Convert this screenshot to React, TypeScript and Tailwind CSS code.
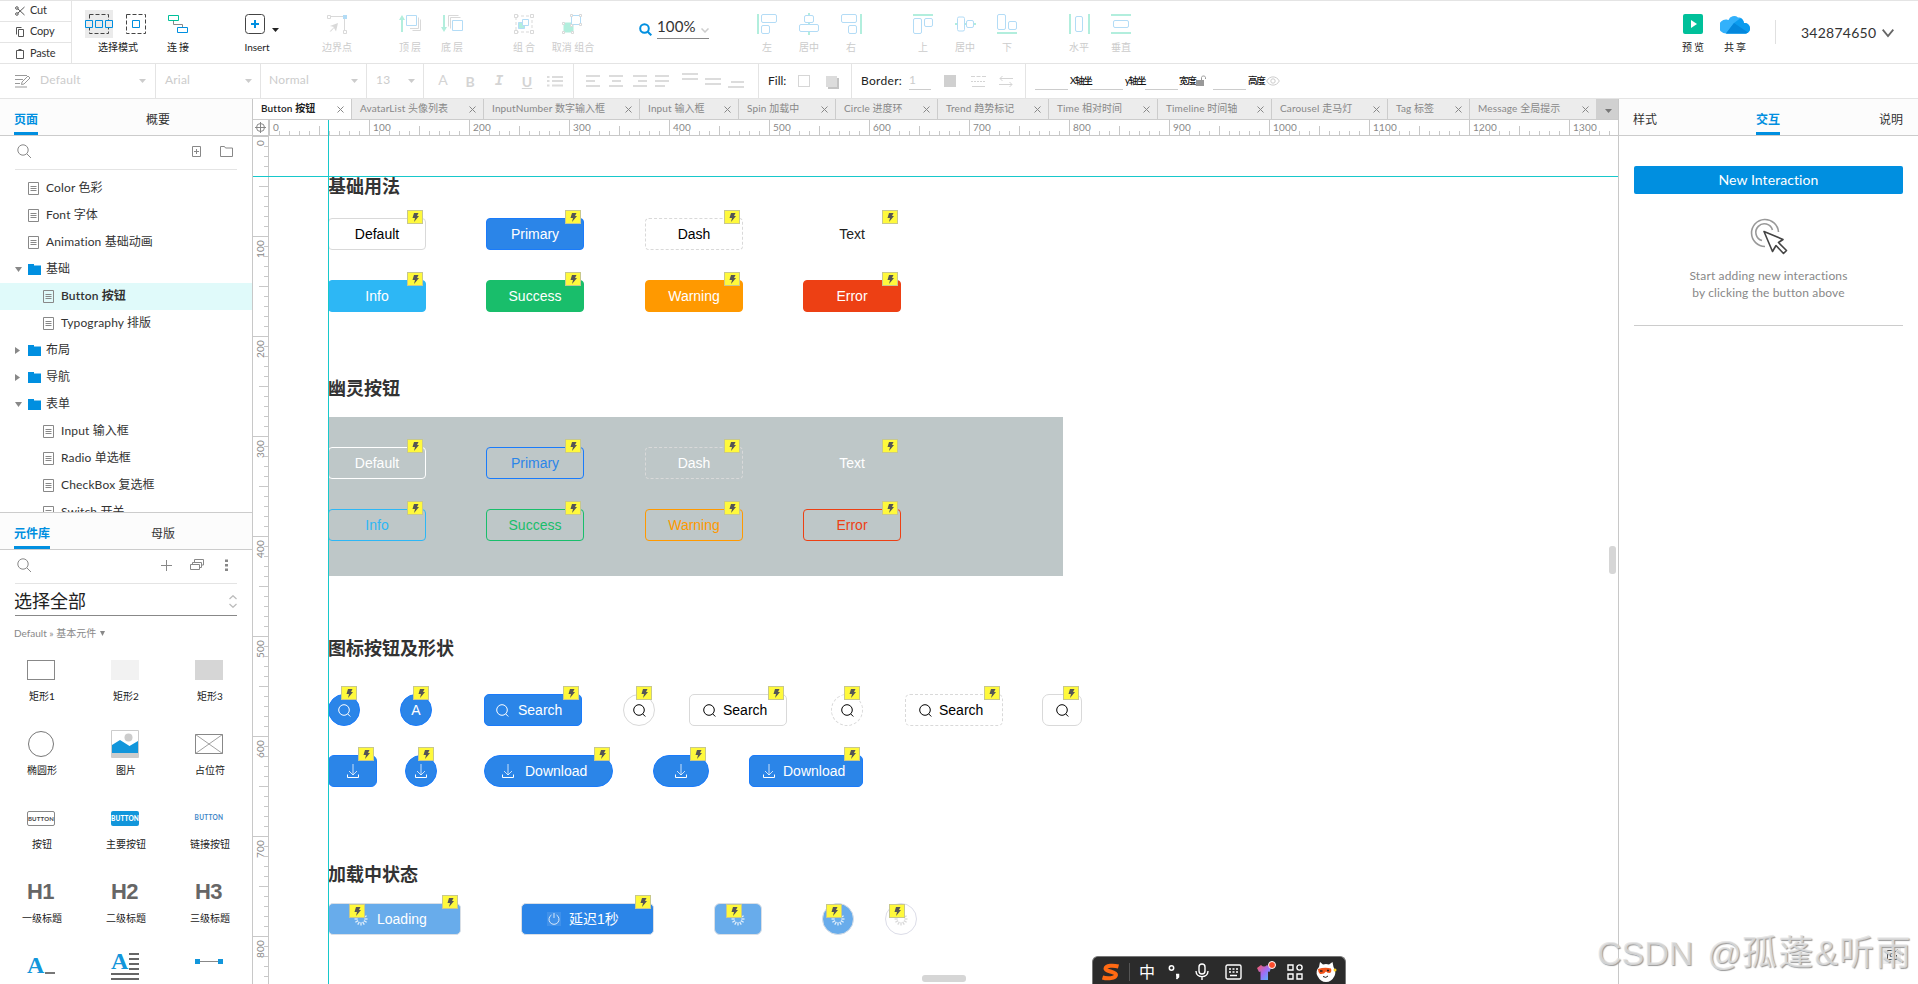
import React from "react";

/* ---------- helpers ---------- */

function Mix({ text, className = "" }: { text: string; className?: string }) {
  const m = text.match(/^([\x20-\x7e]*)([^]*)$/);
  return (
    <span className={"whitespace-pre " + className}>
      <span className="tracking-[0.15px]">{m ? m[1] : ""}</span>
      {m ? m[2] : text}
    </span>
  );
}

type SvgProps = { w: number; h: number; className?: string; children: React.ReactNode; sw?: number };
function Svg({ w, h, className = "", children, sw = 1 }: SvgProps) {
  return (
    <svg width={w} height={h} viewBox={`0 0 ${w} ${h}`} fill="none" stroke="currentColor" strokeWidth={sw} className={"block shrink-0 " + className}>
      {children}
    </svg>
  );
}

const Caret = ({ className = "" }: { className?: string }) => (
  <Svg w={7} h={4} className={className}>
    <path d="M0 0h7L3.5 4z" fill="currentColor" stroke="none" />
  </Svg>
);

const B = "#b3dcf6";
const G = "#b2eedd";
const N = "#d9d9d9";

/* ---------- top toolbar ---------- */

function Clip({ label, last, children }: { label: string; last?: boolean; children: React.ReactNode }) {
  return (
    <div className={"flex h-[21px] items-center pl-[15px] text-[11px] tracking-[-0.2px] text-[#333] " + (last ? "" : "border-b border-[#e4e4e4]")}>
      <span className="flex w-[15px]">{children}</span>
      <span className="-mt-[1px]">{label}</span>
    </div>
  );
}

type ToolProps = { label: string; className?: string; dark?: boolean; spaced?: boolean; children: React.ReactNode };
function Tool({ label, className = "", dark, spaced, children }: ToolProps) {
  return (
    <div className={"flex shrink-0 flex-col items-center pt-[9px] " + (className.includes("w-[") ? "" : "w-[40px] ") + className}>
      <div className="flex h-[28px] items-center justify-center">{children}</div>
      <div className={"mt-[2px] whitespace-nowrap text-[10px] leading-[14px] " + (dark ? "text-[#222] " : "text-[#ccc] ") + (spaced ? "tracking-[2px] -mr-[2px]" : "")}>{label}</div>
    </div>
  );
}

function TopBar() {
  return (
    <div className="flex h-[64px] shrink-0 border-y border-[#e4e4e4] bg-white">
      <div className="w-[72px] shrink-0 border-r border-[#e4e4e4]">
        <Clip label="Cut">
          <Svg w={10} h={10} className="text-[#555]">
            <path d="M2.8 2.8 9.5 9M2.8 7.2 9.5 1" />
            <circle cx="1.9" cy="2" r="1.3" />
            <circle cx="1.9" cy="8" r="1.3" />
          </Svg>
        </Clip>
        <Clip label="Copy">
          <Svg w={10} h={10} className="text-[#555]">
            <path d="M1.5 7.5v-7h5M3.5 2.5h5v7h-5z" />
          </Svg>
        </Clip>
        <Clip label="Paste" last>
          <Svg w={10} h={10} className="text-[#555]">
            <path d="M1.5 1.5h7v8h-7z" />
            <path d="M3.5 1h3" strokeWidth="2" />
          </Svg>
        </Clip>
      </div>

      <Tool label="选择模式" dark className="ml-[13px] w-[66px]">
        <div className="flex w-[66px] items-center gap-[13px]">
          <div className="flex size-[28px] items-center justify-center bg-[#ebebeb]">
            <Svg w={28} h={20} className="text-[#008fe0]">
              <path d="M4.500 .5h19v19h-19z" stroke="#444" strokeDasharray="4 2" />
              <path d="M.5 6.500h7v7h-7zM10.500 6.500h7v7h-7zM20.500 6.500h7v7h-7z" fill="#ebebeb" />
            </Svg>
          </div>
          <Svg w={20} h={20} className="text-[#008fe0]">
            <path d="M.5 .5h19v19h-19z" stroke="#444" strokeDasharray="4 2" />
            <path d="M6.500 6.500h7v7h-7z" />
          </Svg>
        </div>
      </Tool>
      <Tool label="连接" dark spaced className="ml-[7px]">
        <Svg w={20} h={18} className="mb-[1px]">
          <path d="M5.500 5v4.500h9v3" stroke="#888" />
          <path d="M.5 .5h10v5h-10z" stroke="#00c09a" fill="#fff" />
          <path d="M9.500 12.500h10v5h-10z" stroke="#008fe0" fill="#fff" />
        </Svg>
      </Tool>
      <Tool label="Insert" dark className="ml-[46px] w-[26px]">
        <Svg w={20} h={20} className="mr-[4px]">
          <rect x=".5" y=".5" width="19" height="19" rx="3" stroke="#444" />
          <path d="M6 10h8M10 6v8" stroke="#008fe0" strokeWidth="2" />
        </Svg>
      </Tool>
      <div className="ml-[2px] flex w-[9px] pt-[27px]">
        <Caret className="text-[#222]" />
      </div>
      <Tool label="边界点" className="ml-[36px]">
        <Svg w={20} h={20}>
          <path d="M3 2.500h13M17.500 4v12" stroke={N} />
          <path d="M.5 1.500h3v3h-3zM16.500 16.500h3v3h-3z" stroke={N} />
          <path d="M16 1h4v4h-4z" fill={B} stroke="none" />
          <path d="M2.500 17.500 7 13l-4-1 8-3-2 8.500-2-3.500-3 3.500z" fill={N} stroke="none" />
        </Svg>
      </Tool>
      <Tool label="顶层" spaced className="ml-[33px]">
        <Svg w={22} h={18} className="mb-[1px]">
          <path d="M3 17V3" stroke={G} strokeWidth="2" />
          <path d="M0 5l3-5 3 5z" fill={G} stroke="none" />
          <path d="M13.500 15.500h8v-11M11 13.500h8.500v-11" stroke={N} />
          <path d="M7.500 .5h10v10h-10z" stroke={B} fill="#fff" />
        </Svg>
      </Tool>
      <Tool label="底层" spaced className="ml-[2px]">
        <Svg w={22} h={18} className="mb-[1px]">
          <path d="M3 0v14" stroke={G} strokeWidth="2" />
          <path d="M0 12l3 5 3-5z" fill={G} stroke="none" />
          <path d="M7.500 11.500V.5h10M9.500 13.500v-11h10" stroke={N} />
          <path d="M11.500 5.500h10v10h-10z" stroke={B} fill="#fff" />
        </Svg>
      </Tool>
      <Tool label="组合" spaced className="ml-[32px]">
        <Svg w={20} h={20}>
          <path d="M2 2h16v16H2z" stroke={N} strokeDasharray="3 2" />
          <path d="M.5 .5h3v3h-3zM16.500 .5h3v3h-3zM.5 16.500h3v3h-3zM16.500 16.500h3v3h-3z" stroke={N} fill="#fff" />
          <path d="M4.500 8.500h6v6h-6z" fill={G} stroke={B} />
          <path d="M8.500 5.500h6v6h-6z" fill="#fff" stroke={B} />
        </Svg>
      </Tool>
      <Tool label="取消 组合" className="ml-[4px] w-[50px]">
        <Svg w={20} h={20} className="mr-[2px]">
          <path d="M2 9h9v9H2z" fill={G} stroke={G} />
          <path d="M9.500 1.500h9v9h-9z" stroke={B} fill="#fff" />
          <path d="M8.500 .5h2v2h-2zM17.500 .5h2v2h-2zM17.500 9.500h2v2h-2zM.5 8.500h2v2h-2zM.5 17.500h2v2h-2zM9.500 17.500h2v2h-2zM8.500 10.500h2v2h-2z" stroke={N} fill="#fff" />
        </Svg>
      </Tool>

      <div className="ml-[41px] flex w-[70px] shrink-0 pt-[11px]">
        <Svg w={13} h={13} sw={2} className="mt-[11px] text-[#008fe0]">
          <circle cx="5.500" cy="5.500" r="4.300" />
          <path d="M8.700 8.700 12.300 12.300" />
        </Svg>
        <div className="ml-[5px] flex h-[27px] w-[52px] items-center justify-between border-b border-[#888]">
          <span className="mt-[2px] text-[15px] leading-[18px] tracking-[0.15px] text-[#333]">100%</span>
          <Svg w={8} h={5} sw={1.5} className="mt-[11px] text-[#ccc]">
            <path d="M.5 .5 4 4 7.500 .5" />
          </Svg>
        </div>
      </div>

      <Tool label="左" className="ml-[38px]">
        <Svg w={20} h={20}>
          <path d="M1 0v20" stroke={G} strokeWidth="2" />
          <rect x="4.500" y=".5" width="15" height="8" rx="1.500" stroke={B} />
          <rect x="4.500" y="11.500" width="8" height="8" rx="1.500" stroke={B} />
        </Svg>
      </Tool>
      <Tool label="居中" className="ml-[2px]">
        <Svg w={20} h={22}>
          <path d="M10 0v22" stroke={G} strokeWidth="2" />
          <rect x="5.500" y="2.500" width="9" height="7" rx="1.500" stroke={B} fill="#fff" />
          <rect x=".5" y="11.500" width="19" height="7" rx="1.500" stroke={B} fill="#fff" />
        </Svg>
      </Tool>
      <Tool label="右" className="ml-[2px]">
        <Svg w={21} h={20}>
          <path d="M20 0v20" stroke={G} strokeWidth="2" />
          <rect x=".5" y=".5" width="15" height="8" rx="1.500" stroke={B} />
          <rect x="7.500" y="11.500" width="8" height="8" rx="1.500" stroke={B} />
        </Svg>
      </Tool>
      <Tool label="上" className="ml-[32px]">
        <Svg w={20} h={20}>
          <path d="M0 1h20" stroke={G} strokeWidth="2" />
          <rect x=".5" y="4.500" width="8" height="15" rx="1.500" stroke={B} />
          <rect x="11.500" y="4.500" width="8" height="8" rx="1.500" stroke={B} />
        </Svg>
      </Tool>
      <Tool label="居中" className="ml-[2px]">
        <Svg w={21} h={18}>
          <path d="M0 9h21" stroke={G} strokeWidth="2" />
          <rect x="2.500" y="2" width="7" height="14" rx="1.500" stroke={B} fill="#fff" />
          <rect x="11.500" y="5.500" width="7" height="7" rx="1.500" stroke={B} fill="#fff" />
        </Svg>
      </Tool>
      <Tool label="下" className="ml-[2px]">
        <Svg w={20} h={20}>
          <path d="M0 19h20" stroke={G} strokeWidth="2" />
          <rect x=".5" y=".5" width="8" height="15" rx="1.500" stroke={B} />
          <rect x="11.500" y="7.500" width="8" height="8" rx="1.500" stroke={B} />
        </Svg>
      </Tool>
      <Tool label="水平" className="ml-[32px]">
        <Svg w={21} h={20}>
          <path d="M1 0v20M20 0v20" stroke={G} strokeWidth="2" />
          <rect x="6.500" y="2.500" width="7" height="15" rx="1.500" stroke={B} />
        </Svg>
      </Tool>
      <Tool label="垂直" className="ml-[2px]">
        <Svg w={20} h={20}>
          <path d="M0 1h20M0 19h20" stroke={G} strokeWidth="2" />
          <rect x="2.500" y="6.500" width="15" height="7" rx="1.500" stroke={B} />
        </Svg>
      </Tool>

      <div className="ml-auto flex w-[245px] shrink-0">
        <Tool label="预览" dark spaced>
          <Svg w={20} h={20}>
            <rect width="20" height="20" rx="2" fill="#00c09a" stroke="none" />
            <path d="M8 6l6 4-6 4z" fill="#fff" stroke="none" />
          </Svg>
        </Tool>
        <Tool label="共享" dark spaced className="ml-[2px]">
          <Svg w={30} h={20} className="mb-[1px]">
            <path d="M6 19.500a6 6 0 0 1 0-14c1 0 2 .3 2.500 .6A6 6 0 0 1 18 3.500c2-.3 5 .5 6 5.500 3.500 0 6 2 6 5.500s-2.500 5-5 5z" fill="#33b1fb" stroke="none" />
            <path d="M6 19.500 14 9l6-4.500c2 0 3.500 1.500 4 4.500 3.500 0 6 2 6 5.500s-2.500 5-5 5z" fill="#0a9bee" stroke="none" />
            <path d="M6 19.500 14 9l14 9.500c-1 .7-2 1-3 1z" fill="#0487dc" stroke="none" />
          </Svg>
        </Tool>
        <div className="ml-[20px] mt-[19px] h-[24px] w-px bg-[#e0e0e0]" />
        <div className="ml-[25px] mt-[21px] flex h-[20px] items-center text-[14px] tracking-[0.25px] text-[#333]">342874650</div>
        <Svg w={12} h={9} sw={1.800} className="ml-[6px] mt-[28px] text-[#666]">
          <path d="M.7 .7 6 7 11.300 .7" />
        </Svg>
      </div>
    </div>
  );
}

/* ---------- format bar ---------- */

function Drop({ label, className }: { label: string; className: string }) {
  return (
    <div className={"flex h-full shrink-0 items-center justify-between border-r border-[#e4e4e4] text-[12px] tracking-[0.2px] text-[#ccc] " + className}>
      <span className="pb-[2px]">{label}</span>
      <Caret className="text-[#ccc]" />
    </div>
  );
}

const Bars = ({ d, w = 16, className = "" }: { d: string; w?: number; className?: string }) => (
  <Svg w={w} h={14} sw={2} className={"text-[#dcdcdc] " + className}>
    <path d={d} />
  </Svg>
);

function FormatBar() {
  return (
    <div className="flex h-[35px] shrink-0 items-center border-b border-[#e4e4e4] bg-white">
      <Svg w={16} h={14} className="ml-[15px] text-[#999]">
        <path d="M0 1.500h12M0 5.500h8M0 9.500h5M0 13h12" />
        <path d="M6.500 10.500 7 8l6-6 2 2-6 6z" />
      </Svg>
      <Drop label="Default" className="ml-[9px] w-[116px] pr-[9px]" />
      <Drop label="Arial" className="w-[105px] pl-[9px] pr-[8px]" />
      <Drop label="Normal" className="w-[106px] pl-[8px] pr-[8px]" />
      <Drop label="13" className="w-[57px] pl-[9px] pr-[8px]" />
      <div className="flex h-full w-[150px] shrink-0 items-center border-r border-[#e4e4e4] text-[14px] text-[#d4d4d4]">
        <span className="ml-[13px] w-[12px] pb-[4px] text-center">A</span>
        <span className="ml-[15px] w-[12px] text-center font-bold">B</span>
        <span className="ml-[17px] w-[12px] text-center font-bold italic [font-family:'Liberation_Mono',monospace]">I</span>
        <span className="ml-[16px] w-[12px] text-center font-bold underline">U</span>
        <Bars d="M5 3h11M5 7h11M5 11.500h11M0 3h2.500M0 7h2.500M0 11.500h2.500" className="ml-[14px]" />
      </div>
      <div className="flex h-full w-[185px] shrink-0 items-center border-r border-[#e4e4e4]">
        <Bars w={14} d="M0 2h14M0 7h9M0 12h14" className="ml-[12px]" />
        <Bars w={14} d="M0 2h14M3 7h9M0 12h14" className="ml-[9px]" />
        <Bars w={14} d="M0 2h14M5 7h9M0 12h14" className="ml-[10px]" />
        <Bars w={14} d="M0 2h14M0 7h14M0 12h10" className="ml-[8px]" />
        <Bars d="M0 1h16M0 6h16" className="ml-[13px] mb-[2px]" />
        <Bars d="M0 5h16M0 10h16" className="ml-[7px]" />
        <Bars d="M3 7h13M0 12h16" className="ml-[7px] mt-[2px]" />
      </div>
      <div className="flex h-full w-[93px] shrink-0 items-center border-r border-[#e4e4e4]">
        <span className="ml-[9px] w-[20px] text-[12px] text-[#222]">Fill:</span>
        <span className="ml-[10px] size-[12px] border border-[#d6d6d6]" />
        <span className="ml-[16px] size-[11px] bg-[#dcdcdc] shadow-[2px_2px_0_#c4c4c4]" />
      </div>
      <div className="flex h-full w-[174px] shrink-0 items-center border-r border-[#e4e4e4]">
        <span className="ml-[9px] w-[42px] text-[12px] tracking-[0.3px] text-[#222]">Border:</span>
        <span className="ml-[6px] mt-[1px] h-[17px] w-[22px] border-b border-[#ccc] text-[12px] leading-[14px] text-[#ccc]">1</span>
        <span className="ml-[13px] size-[12px] bg-[#d0d0d0]" />
        <Svg w={15} h={12} className="ml-[15px] text-[#d4d4d4]">
          <path d="M0 1.500h15" strokeDasharray="4 1.500" />
          <path d="M0 6.500h15" strokeDasharray="2 1" />
          <path d="M1 11.500h13" />
        </Svg>
        <Svg w={14} h={12} className="ml-[13px] text-[#d4d4d4]">
          <path d="M14 3.500H1M3.500 1 1 3.500 3.500 6M0 9.500h13M10.500 7l2.500 2.500-2.500 2.500" />
        </Svg>
      </div>
      <div className="flex h-full items-center text-[9.500px] tracking-[-1.2px] text-[#111]">
        <span className="ml-[9px] mt-[17px] h-px w-[33px] bg-[#ccc]" />
        <span className="ml-[2px] w-[20px] whitespace-nowrap font-medium">X轴坐</span>
        <span className="mt-[17px] h-px w-[33px] bg-[#ccc]" />
        <span className="ml-[2px] w-[20px] whitespace-nowrap font-medium">y轴坐</span>
        <span className="mt-[17px] h-px w-[33px] bg-[#ccc]" />
        <span className="ml-[1px] w-[17px] whitespace-nowrap font-medium">宽度</span>
        <Svg w={10} h={12} className="text-[#999]">
          <path d="M0 5h8v6H0z" fill="currentColor" stroke="none" />
          <path d="M5.500 5V2.500C5.500 .5 9.500 .5 9.500 2.500V4" />
        </Svg>
        <span className="ml-[7px] mt-[17px] h-px w-[33px] bg-[#ccc]" />
        <span className="ml-[2px] w-[18px] whitespace-nowrap font-medium">高度</span>
        <Svg w={14} h={10} className="text-[#ccc]">
          <path d="M.7 5C3.500 -.5 10.500 -.5 13.300 5 10.500 10.500 3.500 10.500 .7 5z" />
          <circle cx="7" cy="5" r="2.200" />
        </Svg>
      </div>
    </div>
  );
}

/* ---------- left panel ---------- */

const SearchGlyph = () => (
  <Svg w={15} h={15} className="text-[#888]">
    <circle cx="6" cy="6" r="5.200" />
    <path d="M9.800 9.800 14 14" />
  </Svg>
);

const PageIcon = () => (
  <Svg w={11} h={13} className="text-[#888]">
    <path d="M.5 .5h10v12H.5zM2.500 4.500h6M2.500 6.500h6M2.500 8.500h6" />
  </Svg>
);

const FolderIcon = () => (
  <Svg w={13} h={11}>
    <path d="M0 0h6v1.500h7V11H0z" fill="#008fe0" stroke="none" />
  </Svg>
);

type Node = { t: string; k: "page" | "sub" | "open" | "closed"; on?: boolean };
const tree: Node[] = [
  { t: "Color 色彩", k: "page" },
  { t: "Font 字体", k: "page" },
  { t: "Animation 基础动画", k: "page" },
  { t: "基础", k: "open" },
  { t: "Button 按钮", k: "sub", on: true },
  { t: "Typography 排版", k: "sub" },
  { t: "布局", k: "closed" },
  { t: "导航", k: "closed" },
  { t: "表单", k: "open" },
  { t: "Input 输入框", k: "sub" },
  { t: "Radio 单选框", k: "sub" },
  { t: "CheckBox 复选框", k: "sub" },
  { t: "Switch 开关", k: "sub" },
];

function TreeRow({ n }: { n: Node }) {
  const folder = n.k === "open" || n.k === "closed";
  return (
    <div className={"flex h-[27px] items-center text-[12px] " + (n.k === "sub" ? "pl-[43px] " : "pl-[15px] ") + (n.on ? "bg-[#e0fafa] font-semibold text-[#333]" : "text-[#333]")}>
      {n.k !== "sub" && (
        <span className="flex w-[13px]">
          {n.k === "open" && (
            <Svg w={7} h={5} className="text-[#888]"><path d="M0 0h7L3.500 5z" fill="currentColor" stroke="none" /></Svg>
          )}
          {n.k === "closed" && (
            <Svg w={5} h={7} className="text-[#888]"><path d="M0 0v7l5-3.500z" fill="currentColor" stroke="none" /></Svg>
          )}
        </span>
      )}
      <span className="flex w-[18px]">{folder ? <FolderIcon /> : <PageIcon />}</span>
      <Mix text={n.t} className="-mt-[2px]" />
    </div>
  );
}

function PanelTab({ label, on, className = "" }: { label: string; on?: boolean; className?: string }) {
  return (
    <span className={"flex h-full items-center border-b-[3px] pt-[9px] text-[12px] leading-[16px] " + (on ? "border-[#008fe0] font-semibold text-[#008fe0] " : "border-transparent text-[#333] ") + className}>
      {label}
    </span>
  );
}

const widgets: { label: string; icon: React.ReactNode }[] = [
  { label: "矩形1", icon: <div className="h-[20px] w-[28px] border border-[#888]" /> },
  { label: "矩形2", icon: <div className="h-[20px] w-[28px] bg-[#f2f2f2]" /> },
  { label: "矩形3", icon: <div className="h-[20px] w-[28px] bg-[#d6d6d6]" /> },
  { label: "椭圆形", icon: <div className="size-[26px] rounded-full border border-[#777]" /> },
  {
    label: "图片",
    icon: (
      <Svg w={28} h={28}>
        <path d="M.5 .5h27v27H.5z" fill="#fff" stroke="#ccc" />
        <path d="M1 23h26v4H1z" fill="#ccc" stroke="none" />
        <circle cx="17.500" cy="7.500" r="4" fill="#ccc" stroke="none" />
        <path d="M1 15l8-5 9.500 6L27 11v12H1z" fill="#1296db" stroke="none" />
      </Svg>
    ),
  },
  {
    label: "占位符",
    icon: (
      <Svg w={28} h={20} className="text-[#888]">
        <path d="M.5 .5h27v19H.5z" />
        <path d="M.5 .5l27 19M27.500 .5l-27 19" strokeWidth=".8" />
      </Svg>
    ),
  },
  { label: "按钮", icon: <div className="flex h-[15px] w-[28px] items-center justify-center rounded-[2px] border border-[#888] text-[6px] font-bold tracking-[0.2px] text-[#444]">BUTTON</div> },
  { label: "主要按钮", icon: <div className="mt-[1px] flex h-[15px] w-[28px] items-center justify-center rounded-[2px] bg-[#1296db] text-[6.500px] font-black tracking-[0.1px] text-white">BUTTON</div> },
  { label: "链接按钮", icon: <div className="flex h-[15px] w-[28px] items-center justify-center text-[6.500px] font-bold tracking-[0.3px] text-[#3e86c8]">BUTTON</div> },
  { label: "一级标题", icon: <div className="w-[28px] text-[22px] font-bold leading-none tracking-[-0.6px] text-[#666] [font-family:'Liberation_Sans',sans-serif]">H1</div> },
  { label: "二级标题", icon: <div className="w-[28px] text-[22px] font-bold leading-none tracking-[-0.6px] text-[#666] [font-family:'Liberation_Sans',sans-serif]">H2</div> },
  { label: "三级标题", icon: <div className="w-[28px] text-[22px] font-bold leading-none tracking-[-0.6px] text-[#666] [font-family:'Liberation_Sans',sans-serif]">H3</div> },
  {
    label: "",
    icon: (
      <div className="flex h-[20px] w-[28px] items-end gap-[2px]">
        <span className="h-[20px] w-[16px] text-[24px] font-bold leading-[19px] text-[#1296db] [font-family:'Liberation_Serif',serif]">A</span>
        <span className="mb-[2px] h-[2px] w-[10px] bg-[#777]" />
      </div>
    ),
  },
  {
    label: "",
    icon: (
      <div className="h-[28px] w-[28px]">
        <div className="flex h-[20px] gap-[2px]">
          <span className="h-[20px] w-[16px] text-[24px] font-bold leading-[18px] text-[#1296db] [font-family:'Liberation_Serif',serif]">A</span>
          <span className="flex w-[10px] flex-col gap-[3px] pt-[1px]">
            <i className="h-[2px] bg-[#666]" /><i className="h-[2px] bg-[#666]" /><i className="h-[2px] bg-[#666]" /><i className="h-[2px] bg-[#666]" />
          </span>
        </div>
        <div className="mt-[1px] flex flex-col gap-[3px]">
          <i className="h-[2px] bg-[#666]" /><i className="h-[2px] bg-[#666]" />
        </div>
      </div>
    ),
  },
  {
    label: "",
    icon: (
      <div className="-mt-[9px] flex w-[28px] items-center">
        <i className="size-[5px] bg-[#1296db]" /><i className="h-px flex-1 bg-[#888]" /><i className="size-[5px] bg-[#1296db]" />
      </div>
    ),
  },
];

function LeftPanel() {
  return (
    <div className="flex w-[253px] shrink-0 flex-col border-r border-[#c8c8c8] bg-white">
      <div className="flex h-[37px] shrink-0 border-b border-[#ccc] bg-[#fcfcfc]">
        <PanelTab label="页面" on className="ml-[14px]" />
        <PanelTab label="概要" className="ml-[108px]" />
      </div>
      <div className="mx-[15px] flex h-[34px] shrink-0 items-center border-b border-[#e4e4e4] pl-[2px] pb-[2px]">
        <SearchGlyph />
        <Svg w={9} h={11} className="ml-auto text-[#888]">
          <path d="M.5 .5h8v10h-8zM2 5.500h5M4.500 3v5" />
        </Svg>
        <Svg w={13} h={11} className="ml-[19px] mr-[4px] text-[#888]">
          <path d="M.5 .5h4l1 1.500h7v8.500H.5z" />
        </Svg>
      </div>
      <div className="h-[342px] shrink-0 overflow-hidden pt-[5px]">
        {tree.map((n) => (
          <TreeRow key={n.t} n={n} />
        ))}
      </div>
      <div className="flex h-[38px] shrink-0 border-y border-[#ccc] bg-[#fcfcfc]">
        <PanelTab label="元件库" on className="ml-[14px]" />
        <PanelTab label="母版" className="ml-[101px]" />
      </div>
      <div className="mx-[15px] flex h-[34px] shrink-0 items-center border-b border-[#e4e4e4] pl-[2px] pb-[3px]">
        <SearchGlyph />
        <Svg w={11} h={11} className="ml-auto text-[#888]">
          <path d="M0 5.500h11M5.500 0v11" />
        </Svg>
        <Svg w={14} h={12} className="ml-[18px] text-[#888]">
          <path d="M.5 5.500h9v5h-9zM2.500 5V3.500h9v5H10M4.500 3V.5h9v5.500H12" />
        </Svg>
        <Svg w={3} h={12} className="ml-[21px] mr-[9px]">
          <path d="M0 .5h3v2.500H0zM0 5h3v2.500H0zM0 9.500h3V12H0z" fill="#888" stroke="none" />
        </Svg>
      </div>
      <div className="ml-[15px] mr-[15px] flex h-[32px] shrink-0 items-center justify-between border-b border-[#888] pt-[3px]">
        <span className="-ml-[1px] -mt-[1px] text-[18px] leading-[22px] text-[#222]">选择全部</span>
        <Svg w={8} h={13} className="text-[#bbb]" sw={1.200}>
          <path d="M.5 4 4 .7 7.500 4M.5 9 4 12.300 7.500 9" />
        </Svg>
      </div>
      <div className="ml-[14px] mt-[10px] flex h-[14px] shrink-0 items-center text-[10px] text-[#888]">
        Default » 基本元件
        <Svg w={5} h={5} className="ml-[4px]"><path d="M0 0h5L2.500 5z" fill="currentColor" stroke="none" /></Svg>
      </div>
      <div className="mt-[10px] grid min-h-0 flex-1 grid-cols-3 overflow-hidden">
        {widgets.map((w, i) => (
          <div key={i} className="flex h-[74px] flex-col items-center pr-[2px]">
            <div className="flex h-[40px] items-center">{w.icon}</div>
            <div className="-mt-[1px] ml-[2px] text-[10px] leading-[14px] text-[#222]">{w.label}</div>
          </div>
        ))}
      </div>
    </div>
  );
}

/* ---------- canvas ---------- */

const tabs: { t: string; c: string; on?: boolean }[] = [
  { t: "Button 按钮", c: "w-[98px]", on: true },
  { t: "AvatarList 头像列表", c: "w-[132px]" },
  { t: "InputNumber 数字输入框", c: "w-[156px]" },
  { t: "Input 输入框", c: "w-[99px]" },
  { t: "Spin 加载中", c: "w-[97px]" },
  { t: "Circle 进度环", c: "w-[102px]" },
  { t: "Trend 趋势标记", c: "w-[111px]" },
  { t: "Time 相对时间", c: "w-[109px]" },
  { t: "Timeline 时间轴", c: "w-[114px]" },
  { t: "Carousel 走马灯", c: "w-[116px]" },
  { t: "Tag 标签", c: "w-[82px]" },
  { t: "Message 全局提示", c: "w-[127px]" },
];

function TabStrip() {
  return (
    <div className="flex h-[21px] shrink-0 border-b border-[#ccc] bg-[#ececec]">
      {tabs.map((tab) => (
        <div key={tab.t} className={"flex shrink-0 items-center justify-between pr-[7px] text-[10px] " + tab.c + (tab.on ? " bg-white pl-[8px] font-semibold text-[#222]" : " border-l border-[#ccc] pl-[8px] text-[#888]")}>
          <Mix text={tab.t} className="-mt-[2px]" />
          <Svg w={7} h={7} className="mt-[1px] text-[#888]">
            <path d="M.5 .5l6 6M6.500 .5l-6 6" />
          </Svg>
        </div>
      ))}
      <div className="flex flex-1 items-center justify-center bg-[#d0d0d0] pt-[3px] pl-[2px]">
        <Caret className="text-[#777]" />
      </div>
    </div>
  );
}

const marks = Array.from({ length: 14 }, (_, i) => i * 100);
const minor = Array.from({ length: 9 }, (_, i) => (i + 1) * 10);

function HRuler() {
  return (
    <div className="flex h-[16px] shrink-0 overflow-hidden border-b border-[#c8c8c8] bg-white">
      <div className="flex w-[16px] shrink-0 items-center justify-center border-r border-[#c8c8c8]">
        <Svg w={11} h={11} className="text-[#888]">
          <circle cx="5.500" cy="5.500" r="4" />
          <path d="M0 5.500h11M5.500 0v11" />
        </Svg>
      </div>
      {marks.map((m) => (
        <div key={m} className="relative w-[100px] shrink-0 border-l border-[#c8c8c8] pl-[3px] text-[10px] leading-[15px] tracking-[0.2px] text-[#888]">
          {m}
          <Svg w={100} h={15} className="absolute -left-px top-0 text-[#c8c8c8]">
            {minor.map((x) => (
              <path key={x} d={`M${x + 0.5} ${x === 50 ? 6 : 11}v9`} />
            ))}
          </Svg>
        </div>
      ))}
    </div>
  );
}

function VRuler() {
  return (
    <div className="w-[16px] shrink-0 overflow-hidden border-r border-[#c8c8c8] bg-white">
      {marks.slice(0, 9).map((m) => (
        <div key={m} className="relative h-[100px] border-t border-[#c8c8c8] pt-[3px] text-[10px] leading-[15px] tracking-[0.2px] text-[#888]">
          <span className="block rotate-180 text-right [writing-mode:vertical-rl]">{m}</span>
          <Svg w={15} h={100} className="absolute -top-px left-0 text-[#c8c8c8]">
            {minor.map((y) => (
              <path key={y} d={`M${y === 50 ? 6 : 11} ${y + 0.5}h9`} />
            ))}
          </Svg>
        </div>
      ))}
    </div>
  );
}

function Bolt({ x, y }: { x: number; y: number }) {
  return (
    <div className="absolute flex h-[14px] w-[16px] items-center justify-center border border-[#c8c88c] bg-[#fff93c]" style={{ left: x, top: y }}>
      <svg width="7" height="9" viewBox="0 0 7 9" fill="#555">
        <path d="M2 0h4.500L5 3h2L2 9l1-4H.5z" />
      </svg>
    </div>
  );
}

const Lens = () => (
  <Svg w={13} h={13}>
    <circle cx="6" cy="6" r="5.300" />
    <path d="M9.600 9.800 12.300 12.500" />
  </Svg>
);
const Down = () => (
  <Svg w={12} h={14}>
    <path d="M6 0v11M2 7l4 4 4-4" opacity=".75" />
    <path d="M.5 10.500v3h11v-3" />
  </Svg>
);
const Spinner = ({ x, y, tone }: { x: number; y: number; tone: string }) => (
  <svg className={"absolute " + tone} style={{ left: x - 7, top: y - 7 }} width="14" height="14" viewBox="-7 -7 14 14" stroke="currentColor" strokeWidth="1.300">
    {Array.from({ length: 12 }, (_, i) => (
      <path key={i} d="M0 -3.300V-6.500" transform={`rotate(${i * 30})`} />
    ))}
  </svg>
);

type BtnProps = { x: number; y: number; w?: number; bx?: number; c: string; children?: React.ReactNode };
function Btn({ x, y, w = 98, bx, c, children }: BtnProps) {
  return (
    <>
      <div className={"absolute flex h-[32px] items-center border text-[14px] " + c} style={{ left: x, top: y, width: w }}>
        {children}
      </div>
      <Bolt x={bx === undefined ? x + 79 : bx} y={y - 8} />
    </>
  );
}

const Heading = ({ y, children }: { y: number; children: string }) => (
  <div className="absolute left-[59px] whitespace-nowrap text-[18px] font-bold leading-[24px] text-[#333]" style={{ top: y }}>
    {children}
  </div>
);

const mid = " justify-center rounded-[4px]";
const solid = " border-[#1a7bfb] bg-[#2b85e8] text-white";
const line = " border-[#d9d9d9] bg-white text-black";

const X = [59, 217, 376, 534];
const plain = [
  ["Default", "border-[#d9d9d9] bg-white text-black"],
  ["Primary", "border-[#1a7bfb] bg-[#2b85e8] text-white"],
  ["Dash", "border-dashed border-[#d9d9d9] bg-white text-black"],
  ["Text", "border-transparent text-[#222]"],
];
const states = [
  ["Info", "border-[#2db7f5] bg-[#2db7f5] text-white"],
  ["Success", "border-[#19be6b] bg-[#19be6b] text-white"],
  ["Warning", "border-[#ff9900] bg-[#ff9900] text-white"],
  ["Error", "border-[#ed4014] bg-[#ed4014] text-white"],
];
const ghost = [
  ["Default", "border-white text-white"],
  ["Primary", "border-[#1a7bfb] text-[#2b85e8]"],
  ["Dash", "border-dashed border-[#d9d9d9] text-white"],
  ["Text", "border-transparent text-white"],
];
const ghostStates = [
  ["Info", "border-[#2db7f5] text-[#2db7f5]"],
  ["Success", "border-[#19be6b] text-[#19be6b]"],
  ["Warning", "border-[#ff9900] text-[#ff9900]"],
  ["Error", "border-[#ed4014] text-[#ed4014]"],
];

const BtnRow = ({ y, items }: { y: number; items: string[][] }) => (
  <>
    {items.map(([t, c], i) => (
      <Btn key={t} x={X[i]} y={y} c={c + mid}>{t}</Btn>
    ))}
  </>
);

function Artboard() {
  return (
    <div className="relative min-w-0 flex-1 overflow-hidden bg-white [font-family:'Liberation_Sans','Noto_Sans_CJK_SC',sans-serif]">
      <Heading y={39}>基础用法</Heading>
      <BtnRow y={82} items={plain} />
      <BtnRow y={144} items={states} />

      <Heading y={241}>幽灵按钮</Heading>
      <div className="absolute left-[59px] top-[281px] h-[159px] w-[735px] bg-[#bec7c8]" />
      <BtnRow y={311} items={ghost} />
      <BtnRow y={373} items={ghostStates} />

      <Heading y={501}>图标按钮及形状</Heading>
      <Btn x={59} y={558} w={32} bx={72} c={"justify-center rounded-full" + solid}><Lens /></Btn>
      <Btn x={131} y={558} w={32} bx={144} c={"justify-center rounded-full" + solid}>A</Btn>
      <Btn x={215} y={558} bx={294} c={"rounded-[5px] gap-[9px] pl-[11px]" + solid}><Lens />Search</Btn>
      <Btn x={354} y={558} w={32} bx={367} c={"justify-center rounded-full" + line}><Lens /></Btn>
      <Btn x={420} y={558} bx={499} c={"rounded-[5px] gap-[7px] pl-[13px]" + line}><Lens />Search</Btn>
      <Btn x={562} y={558} w={32} bx={575} c={"justify-center rounded-full border-dashed" + line}><Lens /></Btn>
      <Btn x={636} y={558} bx={715} c={"rounded-[5px] gap-[7px] pl-[13px] border-dashed" + line}><Lens />Search</Btn>
      <Btn x={773} y={558} w={40} bx={794} c={"justify-center rounded-[7px]" + line}><Lens /></Btn>

      <Btn x={59} y={619} w={49} bx={89} c={"pl-[18px] rounded-[6px]" + solid}><Down /></Btn>
      <Btn x={136} y={619} w={32} bx={149} c={"justify-center rounded-full" + solid}><Down /></Btn>
      <Btn x={215} y={619} w={129} bx={325} c={"gap-[11px] rounded-full pl-[17px]" + solid}><Down />Download</Btn>
      <Btn x={384} y={619} w={56} bx={421} c={"justify-center rounded-full" + solid}><Down /></Btn>
      <Btn x={480} y={619} w={114} bx={575} c={"gap-[8px] rounded-[5px] pl-[13px]" + solid}><Down />Download</Btn>

      <Heading y={727}>加载中状态</Heading>
      <Btn x={59} y={767} w={133} bx={173} c="rounded-[5px] border-[#d9dfe6] bg-[#68aceb] pl-[48px] text-white">Loading</Btn>
      <Spinner x={92} y={783} tone="text-white/80" />
      <Bolt x={80} y={768} />
      <Btn x={252} y={767} w={133} bx={366} c="rounded-[5px] border-[#d9dfe6] bg-[#2b85e8] pl-[25px] text-white">
        <span className="mr-[8px] flex size-[14px] items-center justify-center bg-white/10">
          <Svg w={12} h={12} className="opacity-80">
            <path d="M6 0v5M3.500 2a5 5 0 1 0 5 0" />
          </Svg>
        </span>
        延迟1秒
      </Btn>
      <div className="absolute left-[445px] top-[767px] h-[32px] w-[48px] rounded-[6px] border border-[#d9dfe6] bg-[#68aceb]" />
      <Spinner x={469} y={783} tone="text-white/80" />
      <Bolt x={457} y={768} />
      <div className="absolute left-[553px] top-[767px] size-[32px] rounded-full border border-[#d9dfe6] bg-[#68aceb]" />
      <Spinner x={569} y={783} tone="text-white/80" />
      <Bolt x={557} y={768} />
      <div className="absolute left-[616px] top-[767px] size-[32px] rounded-full border border-[#dcdde8] bg-white" />
      <Spinner x={632} y={783} tone="text-[#d9d9d9]" />
      <Bolt x={620} y={768} />

      <div className="absolute left-[59px] top-0 h-full w-px bg-[#17c8cb]" />
      <div className="absolute left-0 top-[40px] h-px w-full bg-[#17c8cb]" />
      <div className="absolute left-[653px] top-[839px] h-[7px] w-[44px] rounded-[3px] bg-[#d6d6d6]" />
      <div className="absolute left-[1340px] top-[410px] h-[28px] w-[7px] rounded-[3px] bg-[#d6d6d6]" />
    </div>
  );
}

/* ---------- right panel ---------- */

function RightPanel() {
  return (
    <div className="w-[300px] shrink-0 border-l border-[#c8c8c8] bg-white">
      <div className="flex h-[37px] justify-between border-b border-[#ccc] bg-[#fcfcfc] pl-[14px] pr-[15px]">
        <PanelTab label="样式" />
        <PanelTab label="交互" on />
        <PanelTab label="说明" />
      </div>
      <div className="mx-[15px] flex flex-col items-center border-b border-[#ccc] pb-[24px] pt-[30px]">
        <button className="h-[28px] w-full rounded-[2px] bg-[#008fe0] pb-[1px] text-[14px] tracking-[0.08px] text-white">New Interaction</button>
        <Svg w={38} h={38} sw={1.600} className="mt-[24px] text-[#999]">
          <path d="M15 28.500A13.500 13.500 0 1 1 28.500 14" />
          <path d="M12 22.500A8.500 8.500 0 1 1 22.500 12" />
          <path d="M14 13.500 33 21.500 28.500 24.500 36.500 32.500 33.500 35.500 26 27.500 22.500 33.500z" stroke="#444" fill="#fff" strokeLinejoin="round" />
        </Svg>
        <div className="mt-[11px] text-center text-[12px] leading-[17px] tracking-[0.15px] text-[#888]">
          Start adding new interactions
          <br />
          by clicking the button above
        </div>
      </div>
    </div>
  );
}

/* ---------- floating overlays ---------- */

function InputBar() {
  return (
    <div className="absolute bottom-0 left-[1092px] flex h-[28px] w-[254px] items-center rounded-t-[6px] border border-b-0 border-[#777] bg-[#2b2b2b] pt-[3px] text-white">
      <Svg w={20} h={18} sw={4} className="ml-[8px] text-[#ff6a13]">
        <path d="M17.500 3.500C12 2 5 2.500 4.500 5.500S15.500 8.500 15 12 6.500 16 1.500 14.500" />
      </Svg>
      <div className="ml-[8px] h-[18px] w-px bg-[#555]" />
      <span className="ml-[9px] w-[16px] text-[16px] leading-[20px]">中</span>
      <Svg w={12} h={16} sw={1.500} className="ml-[13px]">
        <circle cx="3.500" cy="4" r="2.200" />
        <path d="M8 10.500h2.500v2.500L8.500 15" fill="currentColor" />
      </Svg>
      <Svg w={16} h={18} sw={1.400} className="ml-[14px]">
        <rect x="5" y="1" width="6" height="10" rx="3" />
        <path d="M2 8c0 7.500 12 7.500 12 0M8 13.500V17" />
      </Svg>
      <Svg w={17} h={16} sw={1.400} className="ml-[15px]">
        <rect x="1" y="1" width="15" height="14" rx="1.500" />
        <path d="M4 5h2M7.500 5h2M11 5h2M4 8h2M7.500 8h2M11 8h2M5 11.500h7" />
      </Svg>
      <svg width="20" height="20" viewBox="0 0 20 20" className="ml-[14px] -mt-[3px] shrink-0">
        <defs>
          <linearGradient id="shirt" x1="0" y1="0" x2="1" y2="1">
            <stop offset="0" stopColor="#ff5a5a" />
            <stop offset=".5" stopColor="#a06cf5" />
            <stop offset="1" stopColor="#49c3ff" />
          </linearGradient>
        </defs>
        <path d="M5 4q3 3 6 0l4 3-1.500 4-1.500-.5V19H4.500v-8.500L3 11 1 7z" fill="url(#shirt)" />
        <circle cx="16" cy="4" r="3.500" fill="#ff4d2e" stroke="#fff" />
      </svg>
      <Svg w={16} h={16} sw={1.400} className="ml-[11px]">
        <path d="M1 1h5v5H1zM1 10h5v5H1zM10 10h5v5h-5z" />
        <circle cx="12.500" cy="3.500" r="2.600" />
      </Svg>
      <svg width="22" height="22" viewBox="0 0 22 22" className="ml-[12px] shrink-0">
        <path d="M5 1l3 2.500q3-1 6 0L17.500 1l1 5q3 5 1 9-3 6-8.500 6t-8.500-6Q0 10 4 6z" fill="#fff" />
        <path d="M3 8q7-2 13-.500 1 3-1 4.500-3 0-4-1.500-2 3-6 2.500Q3 11 3 8z" fill="#f2541b" />
        <path d="M5 10h2.500M12 9.500h2" stroke="#222" strokeWidth="1.500" />
        <path d="M8 15.500q3 2 5-.5" stroke="#222" fill="none" />
        <circle cx="20" cy="9" r="1.500" fill="#ffd21c" />
      </svg>
    </div>
  );
}

function Watermark() {
  return (
    <div className="absolute bottom-[10px] left-[1597px] flex items-end">
      <span className="absolute left-[286px] top-[14px] flex size-[18px] items-center justify-center bg-[#eee]">
        <Svg w={12} h={12} className="text-[#555]">
          <path d="M8 1.500H1.500v9h9V6M4.500 4.500h3v3h-3zM7 4.500 11.500 .5" />
        </Svg>
      </span>
      <span className="relative whitespace-nowrap text-[34px] leading-[42px] text-[#e2e2e2]/80 [font-family:'Liberation_Sans','Noto_Sans_CJK_SC',sans-serif] [text-shadow:1px_1px_1px_#999]">
        CSDN<span className="ml-[14px]">@</span><span className="tracking-[1.300px] text-[35px]">孤蓬&amp;听雨</span>
      </span>
    </div>
  );
}

export default function App() {
  return (
    <div className="relative flex h-[984px] w-[1918px] flex-col overflow-hidden bg-white [font-family:Lato,'Noto_Sans_CJK_SC',sans-serif]">
      <TopBar />
      <FormatBar />
      <div className="flex min-h-0 flex-1">
        <LeftPanel />
        <div className="flex min-w-0 flex-1 flex-col">
          <TabStrip />
          <div className="relative shrink-0">
            <HRuler />
            <div className="absolute left-[75px] top-0 h-full w-px bg-[#17c8cb]" />
          </div>
          <div className="relative flex min-h-0 flex-1">
            <VRuler />
            <div className="absolute left-0 top-[40px] h-px w-[16px] bg-[#17c8cb]" />
            <Artboard />
          </div>
        </div>
        <RightPanel />
      </div>
      <InputBar />
      <Watermark />
    </div>
  );
}
